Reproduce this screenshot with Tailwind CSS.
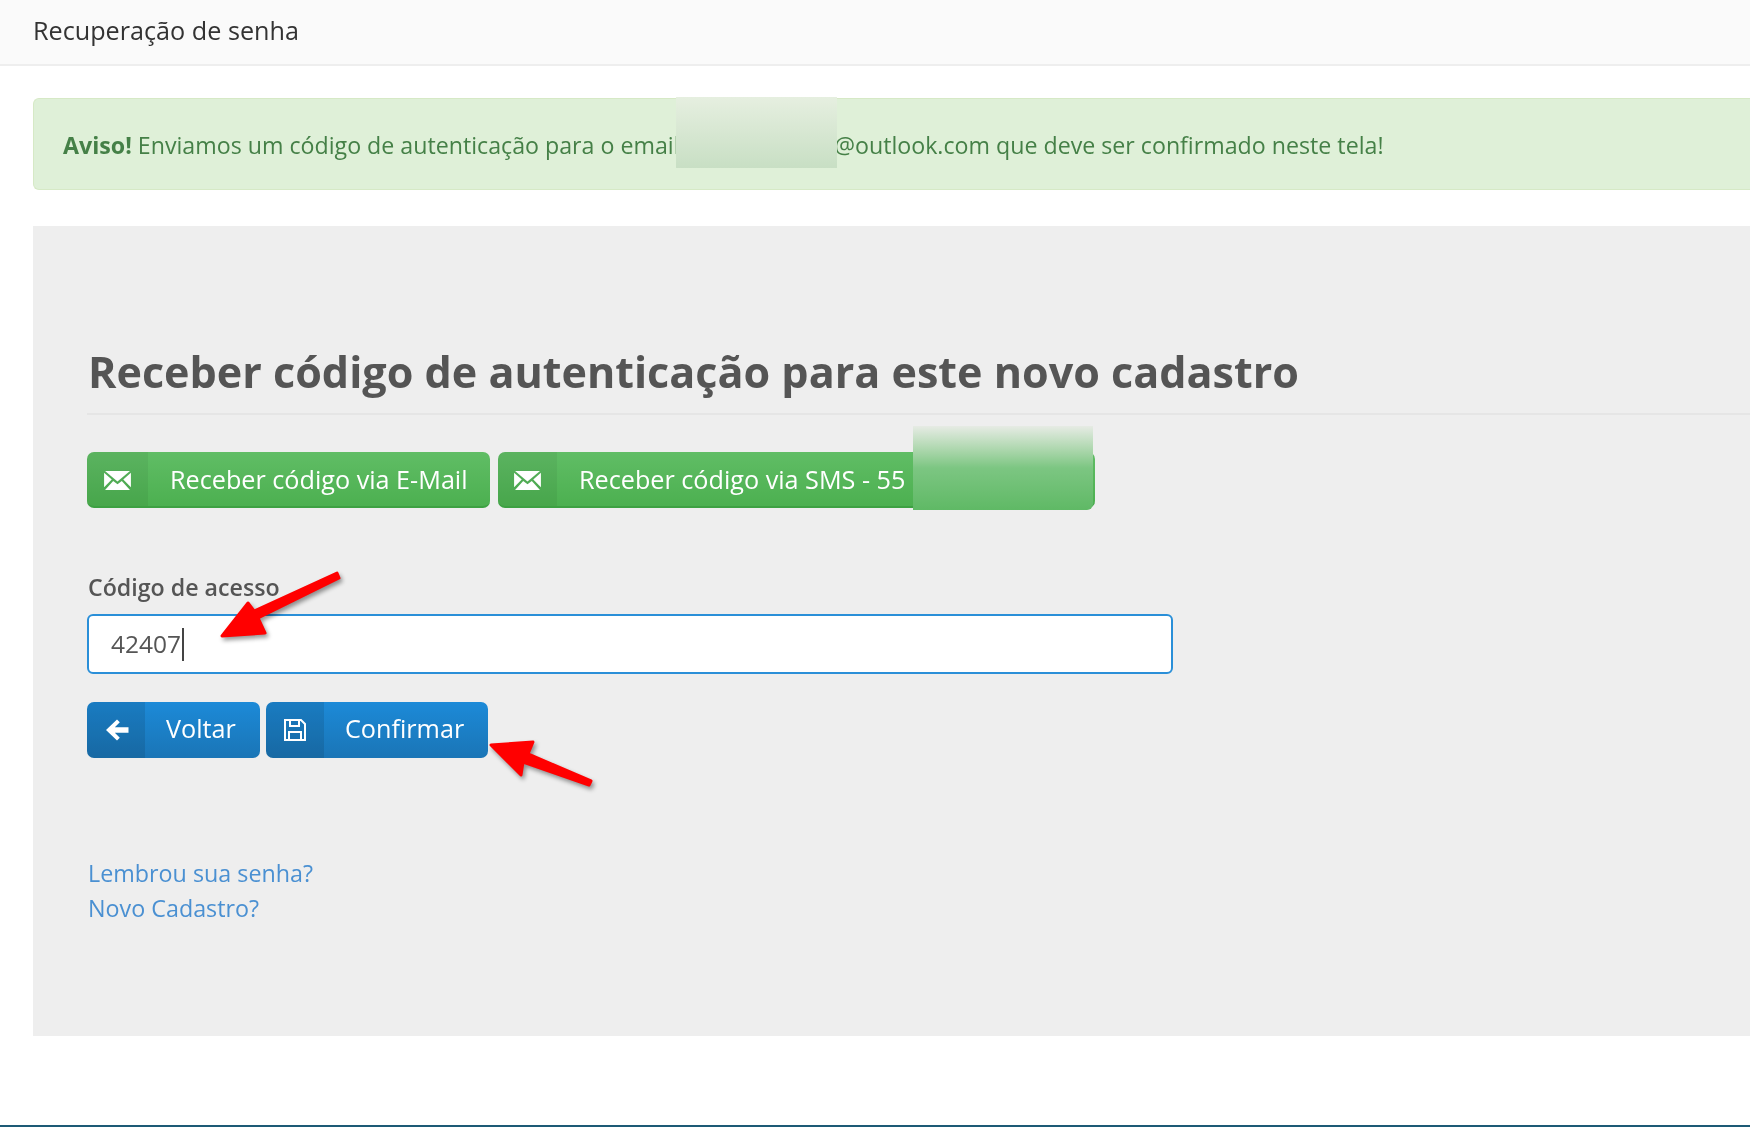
<!DOCTYPE html>
<html lang="pt-BR">

<head>
    <meta charset="UTF-8">
    <title>Recuperação de senha</title>
    <script src="https://cdn.jsdelivr.net/npm/@tailwindcss/browser@4"></script>
</head>

<body class="bg-white font-['Open_Sans',sans-serif] overflow-hidden">
    <div class="relative h-[1127px] w-[1750px] overflow-hidden blur-[0.4px]">
        <header class="h-[66px] bg-[#fafafa] border-b-2 border-[#eeeeee] pl-[33px] pb-[2px] flex items-center">
            <h1 class="text-[25.200px] text-[#333333]">Recuperação de senha</h1>
        </header>

        <div class="mt-[32px] ml-[33px] h-[92px] bg-[#dff0d8] border border-r-0 border-[#d6e9c6] rounded-l-md pl-[29px] pt-[2px] flex items-center text-[23.200px] text-[#458047] whitespace-nowrap">
            <p><strong class="font-bold">Aviso!</strong> Enviamos um código de autenticação para o email xxxxxxxxxxxx<span class="inline-block w-[3px]"></span>@outlook.com que deve ser confirmado neste tela!</p>
        </div>

        <main class="mt-[36px] ml-[33px] h-[810px] bg-[#eeeeee] pl-[54px] pt-[116px]">
            <h2 class="text-[43.100px] leading-[60px] pl-px font-bold text-[#555555] border-b-2 border-[#e5e5e5] h-[73px] whitespace-nowrap">Receber código de autenticação para este novo cadastro</h2>

            <div class="mt-[37px] flex gap-[8px]">
                <button class="h-[56px] w-[403px] flex rounded-[7px] text-white text-[25.200px] bg-linear-to-b from-[#60bd65] to-[#4cb050] border-b-2 border-[#3da142] overflow-hidden">
                    <span class="w-[61px] h-full bg-black/5 flex items-center justify-center">
                        <svg class="w-[27px] h-[23px] mt-[3px]" viewBox="0 0 28 24" fill="#ffffff"><path d="M1 2h26L14 13z" /><path d="M0 4l8 7-8 8zM28 4l-8 7 8 8z" /><path d="M9.500 12.500L14 16l4.500-3.500L27 22H1z" /></svg>
                    </span>
                    <span class="pl-[22px] leading-[54px]">Receber código via E-Mail</span>
                </button>
                <button class="h-[56px] w-[597px] flex rounded-[7px] text-white text-[25.200px] bg-linear-to-b from-[#60bd65] to-[#4cb050] border-b-2 border-[#3da142] overflow-hidden">
                    <span class="w-[59px] h-full bg-black/5 flex items-center justify-center">
                        <svg class="w-[27px] h-[23px] mt-[3px]" viewBox="0 0 28 24" fill="#ffffff"><path d="M1 2h26L14 13z" /><path d="M0 4l8 7-8 8zM28 4l-8 7 8 8z" /><path d="M9.500 12.500L14 16l4.500-3.500L27 22H1z" /></svg>
                    </span>
                    <span class="pl-[22px] leading-[54px] whitespace-nowrap">Receber código via SMS - 55</span>
                </button>
            </div>

            <label class="block mt-[63px] pl-px text-[23.200px] leading-[32px] font-semibold text-[#555555]">Código de acesso</label>
            <div class="mt-[11px] w-[1086px] h-[60px] bg-white border-2 border-[#2a8fd8] rounded-md pl-[22px] flex items-center text-[24.500px] text-[#555555]">
                <span>42407</span><span class="ml-px w-[2px] h-[33px] bg-[#444444]"></span>
            </div>

            <div class="mt-[28px] flex gap-[6px]">
                <button class="h-[56px] w-[173px] flex rounded-[7px] text-white text-[25.200px] bg-linear-to-b from-[#1c8ad8] to-[#1a75b6] overflow-hidden">
                    <span class="w-[58px] h-full bg-black/10 flex items-center justify-center pl-px">
                        <svg class="w-[24px] h-[24px]" viewBox="0 0 24 24" fill="#ffffff"><path d="M12 1.500L14.800 4.300 9.800 9.300H23.500V14.700H9.800L14.800 19.700 12 22.500 1 12z" /></svg>
                    </span>
                    <span class="pl-[21px] leading-[52px]">Voltar</span>
                </button>
                <button class="h-[56px] w-[222px] flex rounded-[7px] text-white text-[25.200px] bg-linear-to-b from-[#1c8ad8] to-[#1a75b6] overflow-hidden">
                    <span class="w-[58px] h-full bg-black/10 flex items-center justify-center">
                        <svg class="w-[24px] h-[24px]" viewBox="0 0 24 24" fill="none" stroke="#ffffff" stroke-width="2"><path d="M2 2h16l4 4v16H2z" /><path d="M7 2v6h9V2" /><path d="M6 22v-8h12v8" /></svg>
                    </span>
                    <span class="pl-[21px] leading-[52px]">Confirmar</span>
                </button>
            </div>

            <div class="mt-[98px] pl-px text-[23.300px] leading-[34.500px] text-[#4a90d2]">
                <a class="block" href="#">Lembrou sua senha?</a>
                <a class="block" href="#">Novo Cadastro?</a>
            </div>
        </main>

        <div class="absolute left-0 right-0 bottom-0 h-[2px] bg-[#1d5a75]"></div>

        <!-- censored bits on top of the text -->
        <div class="absolute left-[676px] top-[97px] w-[161px] h-[71px] bg-linear-to-b from-[#e6efe0] to-[#c8dfc4]"></div>
        <div class="absolute left-[913px] top-[426px] w-[180px] h-[84px] rounded-br-md bg-linear-to-b from-[#e6ebe4] via-[#7cc682] via-50% to-[#5fb965]"></div>

        <!-- red arrows -->
        <svg class="absolute left-0 top-0 pointer-events-none drop-shadow-[2px_3px_2px_rgba(0,0,0,0.4)]" width="1750" height="1127" fill="#ff0000">
            <path d="M337 573L339 578 258 618 265 633 222 636 248 603 254 611z" stroke="#ff0000" stroke-width="3" stroke-linejoin="round" />
            <path d="M591 781L589 785 523 762 521 775 491 745 533 742 528 754z" stroke="#ff0000" stroke-width="3" stroke-linejoin="round" />
        </svg>
    </div>
</body>

</html>
